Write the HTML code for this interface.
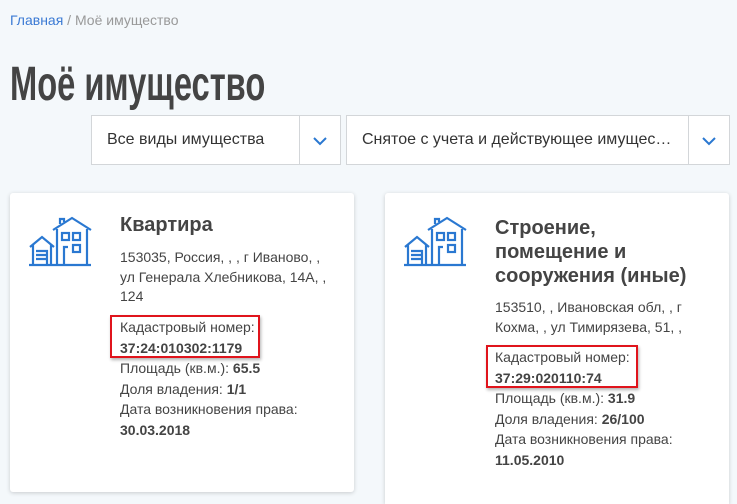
<!DOCTYPE html>
<html><head><meta charset="utf-8"><style>
*{margin:0;padding:0;box-sizing:border-box}
html{width:737px;height:504px;overflow:hidden}
body{width:737px;height:504px;background:#f4f8fb;font-family:"Liberation Sans",sans-serif;color:#333;position:relative;overflow:hidden}
.a{position:absolute}
.bc{left:10px;top:12px;font-size:14px;color:#999}
.bc span{color:#3b7ad4}
h1{position:absolute;left:10px;top:57px;font-family:"Liberation Sans",sans-serif;font-weight:bold;font-size:48px;color:#444;white-space:nowrap;transform:scaleX(0.68);transform-origin:0 0}
.dd{position:absolute;top:115px;height:50px;background:#fff;border:1px solid #d3d6d9;font-size:16px;color:#333;line-height:48px;padding-left:15px;white-space:nowrap}
.dd .ar{position:absolute;right:0;top:0;width:41px;height:48px;border-left:1px solid #d3d6d9}
.card{position:absolute;top:193px;width:344px;height:299px;background:#fff;border-radius:3px;box-shadow:0 1px 4px rgba(0,0,0,.18)}
.t{position:absolute;left:110px;font-size:20px;font-weight:bold;color:#444;line-height:24px}
.tx{position:absolute;left:110px;font-size:14px;line-height:20.5px;color:#444;width:225px;white-space:nowrap}
.red{position:absolute;border:2px solid #e0141c;box-shadow:1px 2px 3px rgba(0,0,0,.3)}
b{color:#444}
svg.h{position:absolute;left:19px;top:22px}
</style></head><body>
<div class="a bc"><span>Главная</span> / Моё имущество</div>
<h1>Моё имущество</h1>
<div class="dd" style="left:91px;width:250px">Все виды имущества<div class="ar"><svg width="41" height="48"><path d="M14 22l6 6 6-6" stroke="#2a78d1" stroke-width="2" fill="none"/></svg></div></div>
<div class="dd" style="left:346px;width:384px">Снятое с учета и действующее имущес…<div class="ar"><svg width="41" height="48"><path d="M14 22l6 6 6-6" stroke="#2a78d1" stroke-width="2" fill="none"/></svg></div></div>

<div class="card" style="left:10px">
<svg class="h" width="64" height="52" viewBox="0 0 64 52" fill="none" stroke="#2a78d1" stroke-width="2.2">
<path d="M1 32L13 22 25 32M4 30v20M22 30v20M7 36h11v14M7 40h11M7 44h11M0 50h62"/>
<path d="M24 15L43 3 62 15M28 14v36M58 14v36M31 9V4h4v3"/>
<rect x="33" y="18" width="7" height="7"/><rect x="44" y="18" width="7" height="7"/><rect x="44" y="30" width="7" height="7"/><path d="M35 50V32h4"/>
</svg>
<div class="t" style="top:20px">Квартира</div>
<div class="tx" style="top:55px;line-height:19.5px">153035, Россия, , , г Иваново, ,<br>ул Генерала Хлебникова, 14А, ,<br>124</div>
<div class="tx" style="top:124px">Кадастровый номер:<br><b>37:24:010302:1179</b><br>Площадь (кв.м.): <b>65.5</b><br>Доля владения: <b>1/1</b><br>Дата возникновения права:<br><b>30.03.2018</b></div>
<div class="red" style="left:100px;top:122px;width:150px;height:43px"></div>
</div>

<div class="card" style="left:385px;height:311px;border-radius:3px 3px 0 0">
<svg class="h" width="64" height="52" viewBox="0 0 64 52" fill="none" stroke="#2a78d1" stroke-width="2.2">
<path d="M1 32L13 22 25 32M4 30v20M22 30v20M7 36h11v14M7 40h11M7 44h11M0 50h62"/>
<path d="M24 15L43 3 62 15M28 14v36M58 14v36M31 9V4h4v3"/>
<rect x="33" y="18" width="7" height="7"/><rect x="44" y="18" width="7" height="7"/><rect x="44" y="30" width="7" height="7"/><path d="M35 50V32h4"/>
</svg>
<div class="t" style="top:23px">Строение,<br>помещение и<br>сооружения (иные)</div>
<div class="tx" style="top:105px;line-height:19.5px">153510, , Ивановская обл, , г<br>Кохма, , ул Тимирязева, 51, ,</div>
<div class="tx" style="top:154px">Кадастровый номер:<br><b>37:29:020110:74</b><br>Площадь (кв.м.): <b>31.9</b><br>Доля владения: <b>26/100</b><br>Дата возникновения права:<br><b>11.05.2010</b></div>
<div class="red" style="left:101px;top:152px;width:152px;height:43px"></div>
</div>
</body></html>
